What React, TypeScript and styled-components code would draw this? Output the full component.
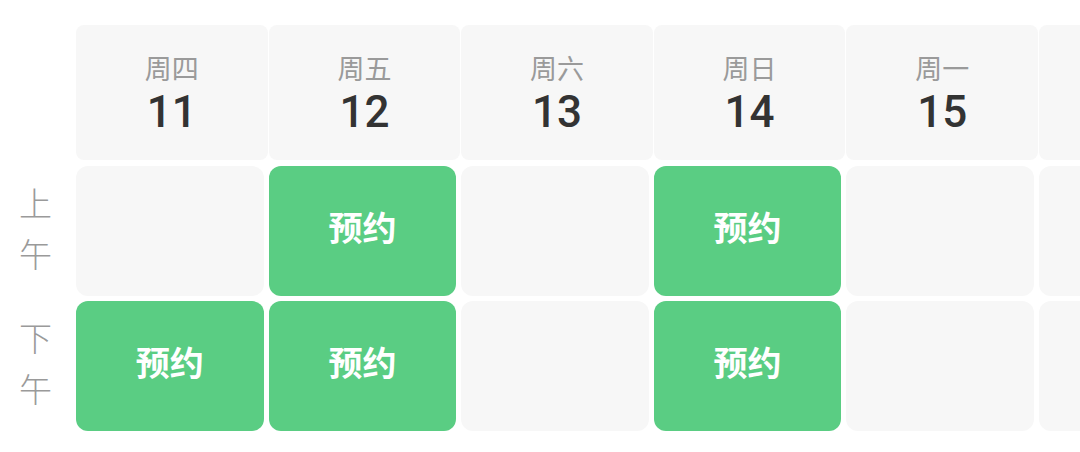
import React from "react";
import styled, { createGlobalStyle } from "styled-components";

const Global = createGlobalStyle`
  html, body { margin: 0; padding: 0; background: #ffffff; }
  body { font-family: Roboto, "Noto Sans CJK SC", sans-serif; overflow: hidden; }
`;

const Page = styled.div`
  width: 1080px;
  height: 452px;
  overflow: hidden;
  padding-top: 25px;
  box-sizing: border-box;
  display: flex;
  flex-direction: column;
  gap: 6px;
`;

const HeaderRow = styled.div`
  display: flex;
  gap: 1px;
  padding-left: 76px;
`;

const DayHead = styled.div`
  flex: 0 0 191.6px;
  height: 135px;
  background: #f7f7f7;
  border-radius: 8px;
  display: flex;
  flex-direction: column;
  align-items: center;
  justify-content: center;
  gap: 4px;
`;

const WeekName = styled.div`
  font-family: "Noto Sans CJK SC", sans-serif;
  font-size: 27px;
  line-height: 34px;
  color: #9a9a9a;
`;

const DayNum = styled.div`
  font-family: Roboto, sans-serif;
  font-weight: 500;
  font-size: 44px;
  line-height: 46px;
  color: #333333;
`;

const Body = styled.div`
  display: flex;
  flex-direction: column;
  gap: 5px;
`;

const Row = styled.div`
  display: flex;
  gap: 5px;
  height: 130px;
`;

const Label = styled.div`
  flex: 0 0 71px;
  display: flex;
  flex-direction: column;
  align-items: center;
  justify-content: center;
  font-family: "Noto Sans CJK SC", sans-serif;
  font-weight: 300;
  font-size: 33px;
  line-height: 51px;
  color: #9a9a9a;
  padding-bottom: 6px;
  box-sizing: border-box;
`;

const Slot = styled.div<{ $open: boolean }>`
  flex: 0 0 187.6px;
  border-radius: 12px;
  background: ${(p) => (p.$open ? "#5acd83" : "#f7f7f7")};
  display: flex;
  align-items: center;
  justify-content: center;
  font-family: "Noto Sans CJK SC", sans-serif;
  font-weight: 700;
  font-size: 34px;
  line-height: 1;
  color: #ffffff;
  padding-bottom: 8px;
  box-sizing: border-box;
`;

const days = [
  { w: "周四", d: 11 },
  { w: "周五", d: 12 },
  { w: "周六", d: 13 },
  { w: "周日", d: 14 },
  { w: "周一", d: 15 },
  { w: "周二", d: 16 },
];

const rows = [
  { label: ["上", "午"], open: [false, true, false, true, false, false] },
  { label: ["下", "午"], open: [true, true, false, true, false, false] },
];

export default function App() {
  return (
    <>
      <Global />
      <Page>
        <HeaderRow>
          {days.map((d) => (
            <DayHead key={d.d}>
              <WeekName>{d.w}</WeekName>
              <DayNum>{d.d}</DayNum>
            </DayHead>
          ))}
        </HeaderRow>
        <Body>
          {rows.map((r, i) => (
            <Row key={i}>
              <Label>
                {r.label.map((c) => (
                  <span key={c}>{c}</span>
                ))}
              </Label>
              {r.open.map((o, j) => (
                <Slot key={j} $open={o}>
                  {o ? "预约" : ""}
                </Slot>
              ))}
            </Row>
          ))}
        </Body>
      </Page>
    </>
  );
}
